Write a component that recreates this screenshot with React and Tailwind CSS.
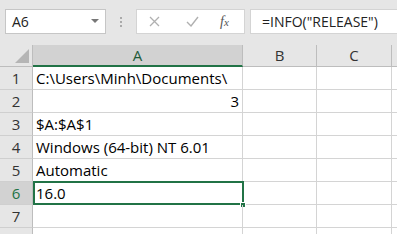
import React from "react";

const rows = [
  { n: 1, a: "C:\\Users\\Minh\\Documents\\", align: "left" },
  { n: 2, a: "3", align: "right" },
  { n: 3, a: "$A:$A$1", align: "left" },
  { n: 4, a: "Windows (64-bit) NT 6.01", align: "left" },
  { n: 5, a: "Automatic", align: "left" },
  { n: 6, a: "16.0", align: "left", sel: true },
  { n: 7, a: "", align: "left" },
  { n: "", a: "", align: "left" },
];

export default function App() {
  return (
    <div className="w-[397px] h-[234px] overflow-hidden bg-white" style={{ fontFamily: "'Open Sans', 'Noto Sans', sans-serif" }}>
      {/* formula bar */}
      <div className="h-[45px] bg-[#e6e6e6] flex items-start pt-[9px]">
        <div className="ml-[5px] w-[101px] h-[25px] bg-white border border-[#c6c6c6] flex items-center justify-between pl-[6px] pr-[6px]">
          <span className="text-[14px] text-[#222]">A6</span>
          <svg width="8" height="5" viewBox="0 0 8 5"><path d="M0 0 L8 0 L4 4 Z" fill="#777" /></svg>
        </div>
        <div className="w-[30px] h-[25px] flex flex-col items-center justify-center gap-[2px]">
          <div className="w-[2px] h-[2px] bg-[#aaa]" />
          <div className="w-[2px] h-[2px] bg-[#aaa]" />
          <div className="w-[2px] h-[2px] bg-[#aaa]" />
        </div>
        <div className="w-[109px] h-[25px] bg-white border border-[#d4d4d4] flex items-center">
          <svg className="ml-[12px]" width="11" height="11" viewBox="0 0 11 11"><path d="M1 1 L10 10 M10 1 L1 10" stroke="#b0b0b0" strokeWidth="1.3" /></svg>
          <svg className="ml-[26px]" width="13" height="11" viewBox="0 0 13 11"><path d="M1 6 L5 10 L12 1" stroke="#b0b0b0" strokeWidth="1.4" fill="none" /></svg>
          <span className="ml-[21px] text-[14px] italic text-[#555]" style={{ fontFamily: "'Liberation Serif', serif" }}>f<span className="text-[11px]">x</span></span>
        </div>
        <div className="ml-[5px] flex-1 h-[25px] bg-white border border-[#d4d4d4] border-r-0 flex items-center pl-[11px]">
          <span className="text-[14px] text-[#222]">=INFO("RELEASE")</span>
        </div>
      </div>
      {/* column header */}
      <div className="flex h-[22px] bg-[#e6e6e6]">
        <div className="w-[33px] shrink-0 border-r border-[#bdbdbd] border-b border-b-[#bdbdbd] relative">
          <svg className="absolute right-[3px] bottom-[3px]" width="14" height="14" viewBox="0 0 14 14"><path d="M14 0 L14 14 L0 14 Z" fill="#b5b5b5" /></svg>
        </div>
        <div className="w-[210px] shrink-0 bg-[#d2d2d2] border-r border-[#bdbdbd] border-b-2 border-b-[#217346] flex items-center justify-center text-[15px] text-[#1f5a3a]">A</div>
        <div className="w-[74px] shrink-0 border-r border-[#bdbdbd] border-b border-b-[#bdbdbd] flex items-center justify-center text-[15px] text-[#333]">B</div>
        <div className="w-[75px] shrink-0 border-r border-[#bdbdbd] border-b border-b-[#bdbdbd] flex items-center justify-center text-[15px] text-[#333]">C</div>
        <div className="flex-1 border-b border-b-[#bdbdbd]" />
      </div>
      {rows.map((r, i) => (
        <div key={i} className="flex h-[23px]">
          <div className={`w-[33px] shrink-0 border-r border-r-[#bdbdbd] border-b border-b-[#cfcfcf] flex items-center justify-center text-[15px] ${r.sel ? "bg-[#d2d2d2] text-[#217346]" : "bg-[#e6e6e6] text-[#333]"}`}>{r.n}</div>
          <div
            className={`w-[210px] shrink-0 border-r border-b border-[#d4d4d4] flex items-center px-[3px] text-[15px] text-black relative ${r.align === "right" ? "justify-end" : ""}`}
          >
            {r.a}
            {r.sel && (
              <>
                <div className="absolute left-0 top-[-1px] w-[211px] h-[24px] border-2 border-[#217346]" />
                <div className="absolute right-[-4px] bottom-[-4px] w-[6px] h-[6px] bg-[#217346] border border-white" />
              </>
            )}
          </div>
          <div className="w-[74px] shrink-0 border-r border-b border-[#d4d4d4]" />
          <div className="w-[75px] shrink-0 border-r border-b border-[#d4d4d4]" />
          <div className="flex-1 border-b border-[#d4d4d4]" />
        </div>
      ))}
    </div>
  );
}
